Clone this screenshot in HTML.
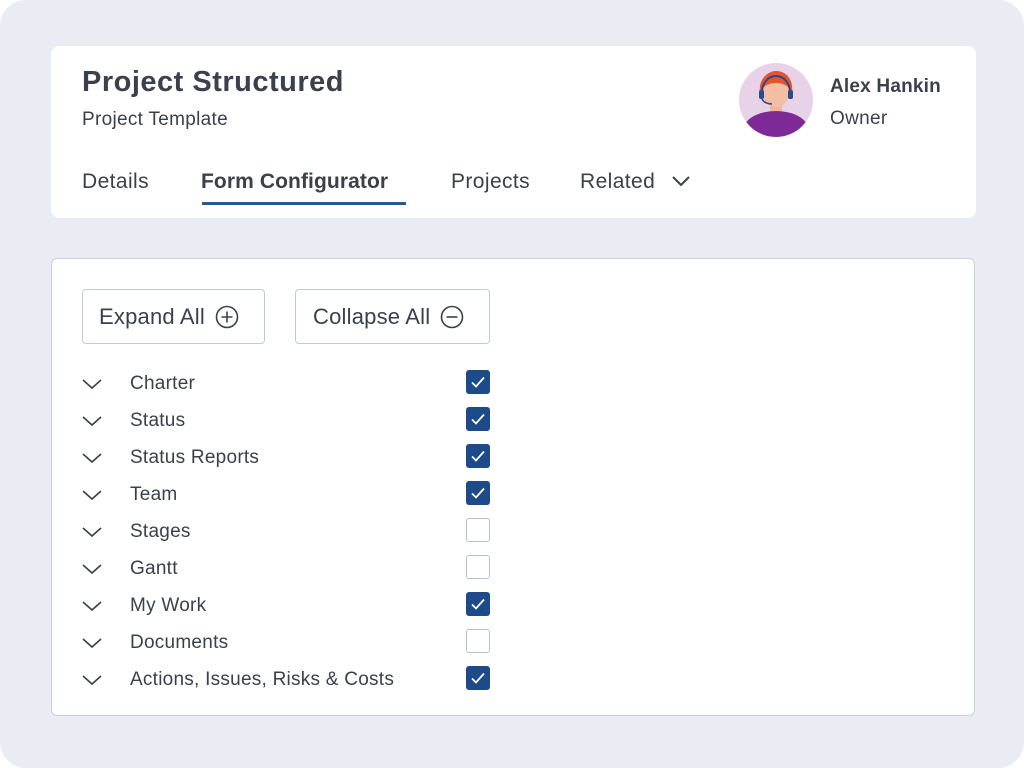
<!DOCTYPE html>
<html><head><style>
body{margin:0;width:1024px;height:768px;background:#fff;font-family:"Liberation Sans",sans-serif;overflow:hidden;position:relative}
.bg{position:absolute;left:0;top:0;width:1024px;height:768px;background:#e9edf3;border-radius:26px}
.card{position:absolute;background:#fff;border-radius:8px}
.t{position:absolute;color:#3b404c;white-space:nowrap;letter-spacing:0.4px}
.btn{position:absolute;border:1.5px solid #bfcadb;border-radius:4px;box-sizing:border-box;height:55px;top:289px;font-size:22px;color:#3b404c;display:flex;align-items:center;padding-left:16px;letter-spacing:0.2px}
.row{position:absolute;left:82px;height:30px;width:410px}
.row svg.ch{position:absolute;left:0;top:10px}
.row span{position:absolute;left:48px;top:5px;font-size:19px;color:#3b404c;letter-spacing:0.25px}
.cb{position:absolute;left:384px;top:2px;width:24px;height:24px;border-radius:3px;box-sizing:border-box}
.on{background:#1d4a89}
.off{border:1.5px solid #b8c1ce;background:#fff}
</style></head><body>
<div class="bg"></div>
<div class="card" style="left:51px;top:46px;width:925px;height:172px"></div>
<div class="t" style="left:82px;top:66px;font-size:29px;font-weight:bold;letter-spacing:0.5px">Project Structured</div>
<div class="t" style="left:82px;top:109px;font-size:19px;letter-spacing:0.3px">Project Template</div>
<div class="t" style="left:82px;top:170px;font-size:21px">Details</div>
<div class="t" style="left:201px;top:170px;font-size:21px;font-weight:bold;letter-spacing:0.1px">Form Configurator</div>
<div style="position:absolute;left:202px;top:202px;width:204px;height:3px;background:#2d5592"></div>
<div class="t" style="left:451px;top:170px;font-size:21px">Projects</div>
<div class="t" style="left:580px;top:170px;font-size:21px">Related</div>
<svg style="position:absolute;left:671px;top:174px" width="20" height="14"><path d="M2 3l8 8 8-8" fill="none" stroke="#3b404c" stroke-width="2"/></svg>
<svg style="position:absolute;left:739px;top:63px" width="74" height="74" viewBox="0 0 74 74">
<defs><clipPath id="c"><circle cx="37" cy="37" r="37"/></clipPath></defs>
<circle cx="37" cy="37" r="37" fill="#e8d2e8"/>
<g clip-path="url(#c)">
<rect x="31" y="38" width="12" height="12" fill="#f0b59c"/>
<ellipse cx="37" cy="66" rx="32" ry="18" fill="#7d2a96"/>
<ellipse cx="37" cy="28" rx="14" ry="16" fill="#f4bea5"/>
<path d="M21 30c-2-14 8-22 16-22s18 6 16 22c-3-7-8-10-16-10s-13 3-16 10z" fill="#e8532b"/>
<path d="M23 30c0-10 6-17 14-17s14 7 14 17" fill="none" stroke="#2b4a8c" stroke-width="2"/>
<rect x="20" y="27" width="5" height="9" rx="2" fill="#2b4a8c"/>
<rect x="49" y="27" width="5" height="9" rx="2" fill="#2b4a8c"/>
<path d="M23 36c2 4 6 5 10 5" fill="none" stroke="#2b4a8c" stroke-width="1.5"/>
</g></svg>
<div class="t" style="left:830px;top:76px;font-size:19px;font-weight:bold;letter-spacing:0.2px">Alex Hankin</div>
<div class="t" style="left:830px;top:108px;font-size:19px;letter-spacing:0.3px">Owner</div>

<div class="card" style="left:51px;top:258px;width:924px;height:458px;border:1.5px solid #c6d1e2;box-sizing:border-box;border-radius:6px"></div>
<div class="btn" style="left:82px;width:183px">Expand All
<svg style="margin-left:10px" width="24" height="24"><circle cx="12" cy="12" r="10.5" fill="none" stroke="#3b404c" stroke-width="1.6"/><path d="M12 6.5v11M6.5 12h11" stroke="#3b404c" stroke-width="1.6"/></svg></div>
<div class="btn" style="left:295px;width:195px;padding-left:17px">Collapse All
<svg style="margin-left:10px" width="24" height="24"><circle cx="12" cy="12" r="10.5" fill="none" stroke="#3b404c" stroke-width="1.6"/><path d="M6.5 12h11" stroke="#3b404c" stroke-width="1.6"/></svg></div>

<div id="rows"></div>
<script>
var items=[["Charter",1],["Status",1],["Status Reports",1],["Team",1],["Stages",0],["Gantt",0],["My Work",1],["Documents",0],["Actions, Issues, Risks & Costs",1]];
var h="";
items.forEach(function(it,i){
var y=368+i*37;
h+='<div class="row" style="top:'+y+'px"><svg class="ch" width="20" height="12"><path d="M1 2l9 8 9-8" fill="none" stroke="#3b404c" stroke-width="1.6"/></svg><span>'+it[0].replace("&","&amp;")+'</span><div class="cb '+(it[1]?'on':'off')+'">'+(it[1]?'<svg width="24" height="24"><path d="M6 12.5l4 4 8-9" fill="none" stroke="#fff" stroke-width="1.8"/></svg>':'')+'</div></div>';
});
document.getElementById("rows").innerHTML=h;
</script>
</body></html>
